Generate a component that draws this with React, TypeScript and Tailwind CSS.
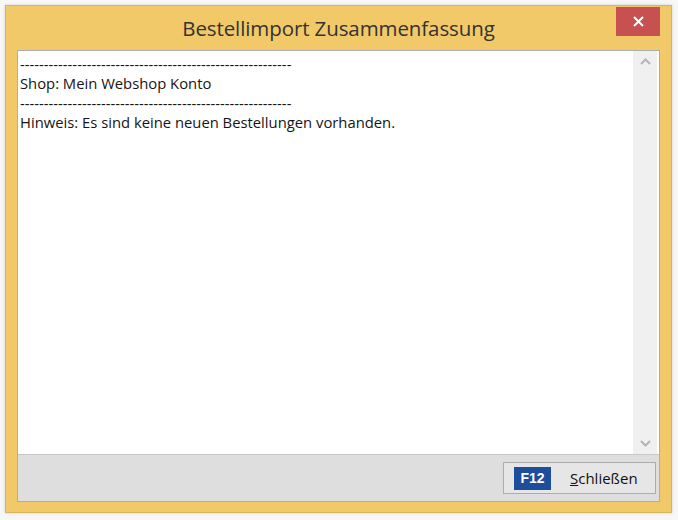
import React from 'react';

const lines = [
  '-'.repeat(57),
  'Shop: Mein Webshop Konto',
  '-'.repeat(57),
  'Hinweis: Es sind keine neuen Bestellungen vorhanden.',
];

const App: React.FC = () => {
  return (
    <div className="w-[678px] h-[520px] bg-[#f7f7f7] p-[5px] pb-[7px] pr-[6px]" style={{ fontFamily: '"Liberation Sans", Arial, sans-serif' }}>
      <div className="h-full flex flex-col bg-[#f1c968] border border-[#d8b45c] shadow-[0_0_3px_rgba(0,0,0,0.15)]">
        {/* title bar */}
        <div className="relative h-[44px] flex items-center justify-center">
          <span className="text-[20.5px] text-[#333] tracking-[-0.1px]" style={{ fontFamily: '"Open Sans", "Noto Sans", sans-serif' }}>
            Bestellimport Zusammenfassung
          </span>
          <button className="absolute right-[11px] top-[1px] w-[44px] h-[29px] bg-[#c75050] flex items-center justify-center text-white">
            <svg width="11" height="11" viewBox="0 0 11 11">
              <path d="M1 1 L10 10 M10 1 L1 10" stroke="white" strokeWidth="2" />
            </svg>
          </button>
        </div>

        {/* content */}
        <div className="flex-1 mx-[11px] mb-[10px] flex flex-col border border-[#adadad]">
          <div className="flex-1 flex bg-white">
            <div className="flex-1 pl-[2px] pt-[4px] text-[14.8px] leading-[19.3px] text-[#151515]" style={{ fontFamily: '"Open Sans", "Noto Sans", sans-serif' }}>
              {lines.map((l, i) => (
                <div key={i} className="whitespace-pre">{l}</div>
              ))}
            </div>
            <div className="w-[24px] mr-[2px] bg-[#f0f0f0] flex flex-col justify-between items-center py-[7px]">
              <svg width="11" height="7" viewBox="0 0 11 7">
                <path d="M1 6 L5.5 1.5 L10 6" stroke="#b5b5b5" strokeWidth="2" fill="none" />
              </svg>
              <svg width="11" height="7" viewBox="0 0 11 7">
                <path d="M1 1 L5.5 5.5 L10 1" stroke="#b5b5b5" strokeWidth="2" fill="none" />
              </svg>
            </div>
          </div>
          <div className="h-[47px] bg-[#dedede] border-t border-[#c8c8c8] flex items-center justify-end pr-[3px]">
            <button className="w-[153px] h-[32px] bg-[#e6e6e6] border border-[#acacac] flex items-center pl-[10px]">
              <span className="w-[37px] h-[23px] bg-[#1d4e9c] text-white font-bold text-[14px] flex items-center justify-center">F12</span>
              <span className="ml-[19px] text-[15px] text-[#111]" style={{ fontFamily: '"Open Sans", "Noto Sans", sans-serif' }}>
                <span className="underline">S</span>chließen
              </span>
            </button>
          </div>
        </div>
      </div>
    </div>
  );
};

export default App;
